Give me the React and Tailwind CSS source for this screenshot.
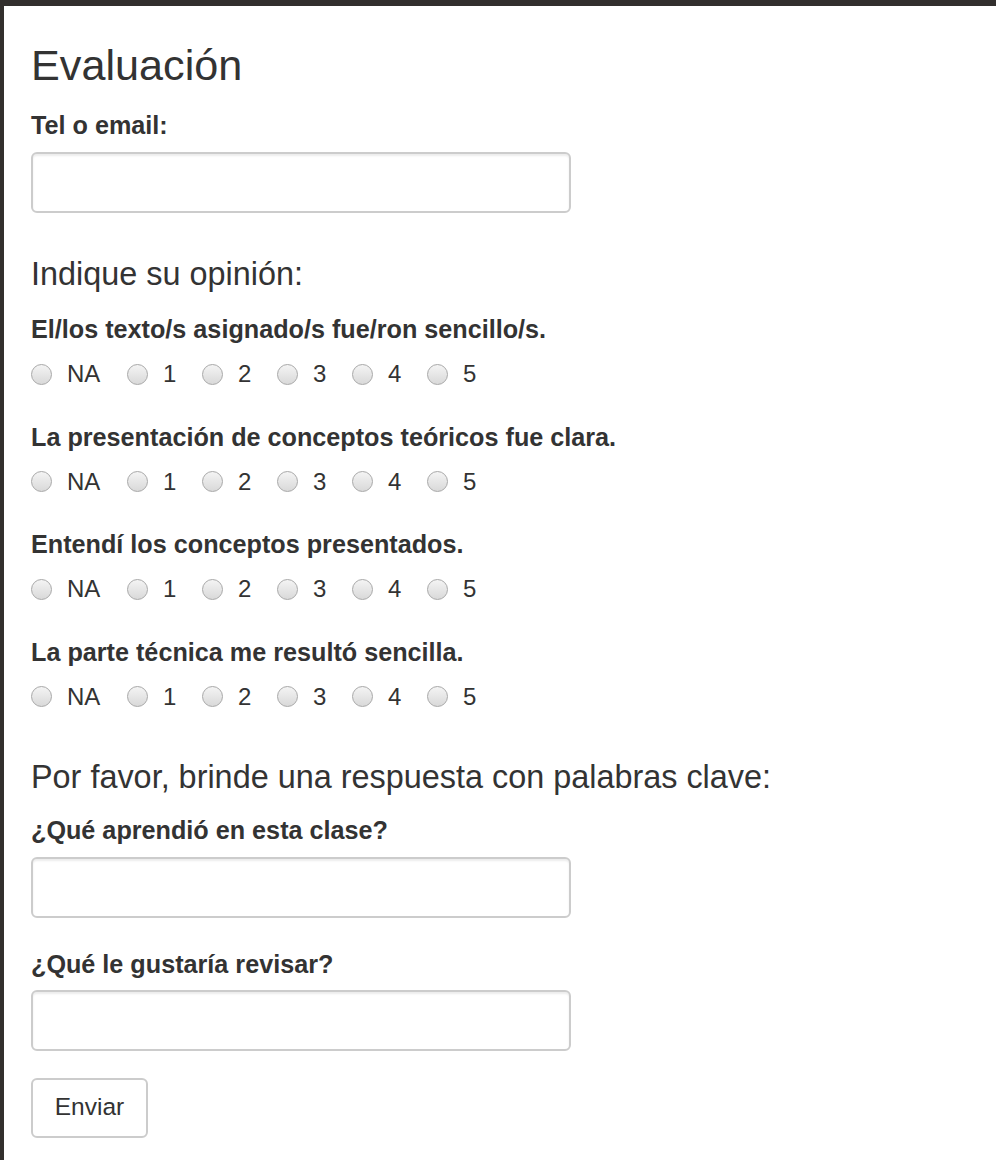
import React from 'react';

const QUESTIONS = [
    'El/los texto/s asignado/s fue/ron sencillo/s.',
    'La presentación de conceptos teóricos fue clara.',
    'Entendí los conceptos presentados.',
    'La parte técnica me resultó sencilla.',
];

const OPTIONS = ['NA', '1', '2', '3', '4', '5'];

const Radio = () => (
    <span className="w-[21px] h-[21px] rounded-full border border-[#a8a8a8] bg-gradient-to-b from-[#f4f4f4] to-[#d9d9d9] shrink-0" />
);

const TextInput = () => (
    <input
        type="text"
        className="block w-[540px] h-[61px] border-2 border-[#cccccc] rounded-[6px] bg-white shadow-[inset_0_2px_2px_rgba(0,0,0,0.075)] outline-none px-4 text-[25px]"
    />
);

const App = () => {
    return (
        <div
            className="min-h-screen bg-white border-t-[6px] border-l-[4px] border-[#322f2d] pl-[27px] pb-[22px] text-[#333333]"
            style={{ fontFamily: '"Liberation Sans", Arial, sans-serif' }}
        >
            <h1 className="text-[43.2px] leading-[48px] mt-[35px]">Evaluación</h1>

            {/* Contact */}
            <label className="block text-[25.2px] leading-[36px] font-bold mt-[18px]">Tel o email:</label>
            <div className="mt-[9px]">
                <TextInput />
            </div>

            {/* Ratings */}
            <h2 className="text-[32.4px] leading-[36px] mt-[43px]">Indique su opinión:</h2>
            <div className="flex flex-col gap-[27.6px] mt-[19px]">
                {QUESTIONS.map((q) => (
                    <div key={q}>
                        <p className="text-[25.2px] leading-[36px] font-bold">{q}</p>
                        <div className="flex items-center mt-[10px] text-[24px] leading-[34px]">
                            {OPTIONS.map((o, i) => (
                                <label key={o} className={`flex items-center gap-[15px] ${i === 0 ? 'w-[96px]' : 'w-[75px]'}`}>
                                    <Radio />
                                    <span>{o}</span>
                                </label>
                            ))}
                        </div>
                    </div>
                ))}
            </div>

            {/* Keywords */}
            <h2 className="text-[32.4px] leading-[36px] mt-[45px]">Por favor, brinde una respuesta con palabras clave:</h2>
            <label className="block text-[25.2px] leading-[36px] font-bold mt-[17px]">¿Qué aprendió en esta clase?</label>
            <div className="mt-[9px]">
                <TextInput />
            </div>
            <label className="block text-[25.2px] leading-[36px] font-bold mt-[28px]">¿Qué le gustaría revisar?</label>
            <div className="mt-[8px]">
                <TextInput />
            </div>

            <button className="mt-[27px] w-[117px] h-[60px] border-2 border-[#cccccc] rounded-[6px] bg-white text-[24.5px] text-[#333333]">
                Enviar
            </button>
        </div>
    );
};

export default App;
